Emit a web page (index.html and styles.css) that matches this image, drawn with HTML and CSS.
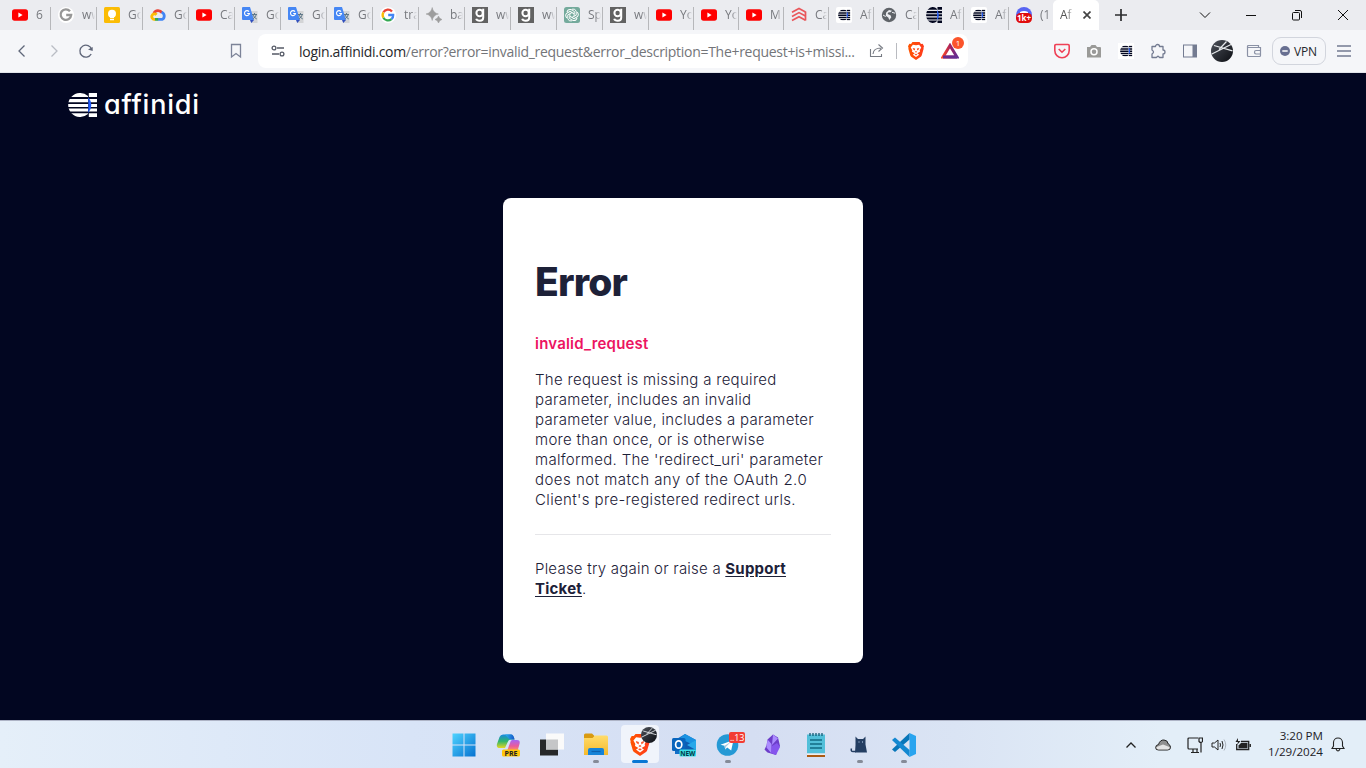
FILE: index.html
```
<!DOCTYPE html>
<html lang="en">
<head>
<meta charset="utf-8">
<title>Affinidi Login</title>
<link rel="stylesheet" href="styles.css">
</head>
<body>
<svg class="defs" width="0" height="0" aria-hidden="true">
  <defs>
    <linearGradient id="g-bat" x1="0" x2="1"><stop offset="0" stop-color="#ff4724"/><stop offset=".55" stop-color="#9e1f63"/><stop offset="1" stop-color="#662d91"/></linearGradient>
    <linearGradient id="g-win" x1="0" y1="0" x2="1" y2="1"><stop offset="0" stop-color="#4fd3ff"/><stop offset="1" stop-color="#0672d0"/></linearGradient>
    <linearGradient id="g-brave" x1="0" x2="1"><stop offset="0" stop-color="#ff5500"/><stop offset="1" stop-color="#ff3a1c"/></linearGradient>
    <linearGradient id="g-fold" x1="0" y1="0" x2="0" y2="1"><stop offset="0" stop-color="#ffdc6b"/><stop offset="1" stop-color="#f5b92c"/></linearGradient>
    <linearGradient id="g-av" x1="0" y1="0" x2="1" y2="1"><stop offset="0" stop-color="#4d525b"/><stop offset="1" stop-color="#0b0d12"/></linearGradient>
    <linearGradient id="g-cop1" x1="0" y1="0" x2="1" y2="0"><stop offset="0" stop-color="#26b7f0"/><stop offset="1" stop-color="#1854c8"/></linearGradient>
    <linearGradient id="g-cop2" x1="0" y1="0" x2="0" y2="1"><stop offset="0" stop-color="#a566f5"/><stop offset=".55" stop-color="#eb5b9b"/><stop offset="1" stop-color="#ff9b55"/></linearGradient>
    <linearGradient id="g-cop3" x1="0" y1="0" x2="0" y2="1"><stop offset="0" stop-color="#1889e0"/><stop offset=".5" stop-color="#2fb56c"/><stop offset="1" stop-color="#e6d722"/></linearGradient>
    <symbol id="yt" viewBox="0 0 16 16"><rect y="2.3" width="16" height="11.4" rx="2.6" fill="#f00"/><path d="M6.4 5.6v4.8L10.6 8z" fill="#fff"/></symbol>
    <symbol id="ggrey" viewBox="0 0 16 16"><circle cx="8" cy="8" r="8" fill="#fff"/><path d="M12 4.2A5.3 5.3 0 1 0 13.2 8H8.2" fill="none" stroke="#979797" stroke-width="2.3"/></symbol>
    <symbol id="gcol" viewBox="0 0 16 16"><circle cx="8" cy="8" r="8" fill="#fff"/><g fill="none" stroke-width="2.3"><path d="M12 4.4A5.3 5.3 0 0 0 3.4 5.3" stroke="#ea4335"/><path d="M3.4 5.3a5.3 5.3 0 0 0 0 5.4" stroke="#fbbc05"/><path d="M3.4 10.7a5.3 5.3 0 0 0 8.1 1.4" stroke="#34a853"/><path d="M11.5 12.1A5 5 0 0 0 13.2 8H8.2" stroke="#4285f4"/></g></symbol>
    <symbol id="keep" viewBox="0 0 16 16"><rect width="16" height="16" rx="1.5" fill="#fbbc04"/><circle cx="8" cy="6.8" r="4" fill="#fff"/><path d="M6 9h4v2.2H6zM6 12h4v1.3H6z" fill="#fff"/></symbol>
    <symbol id="cloud" viewBox="0 0 16 16"><g fill="none" stroke-width="2.8"><path d="M3.9 6.3A4.6 4.6 0 0 1 12 5.8" stroke="#ea4335"/><path d="M11.6 5.2A4 4 0 0 1 12.3 12.4H8" stroke="#4285f4"/><path d="M8.2 12.4H4.6" stroke="#34a853"/><path d="M5 12.4a2.8 2.8 0 1 1 1.6-4.7" stroke="#fbbc05"/></g></symbol>
    <symbol id="trans" viewBox="0 0 16 16"><path d="M6 4h9.5v12H9z" fill="#d3d4d6"/><path d="M1 0h7l4 13H1a1 1 0 0 1-1-1V1a1 1 0 0 1 1-1z" fill="#4687f4"/><path d="M8 13h4l-2.7 3z" fill="#304fbe"/><path d="M7 4.6A2.5 2.5 0 1 0 7.5 6.5H5.2" fill="none" stroke="#fff" stroke-width="1.1"/><path d="M10 7.5h5M12.5 6v1.5M14.4 7.5q-1 3-3.6 4.4M11 8q1.4 3 3.8 4" fill="none" stroke="#60798a"/></symbol>
    <symbol id="spark" viewBox="0 0 16 16"><path d="M6.2.5q1 5.400 6.200 6.500-5.200 1.100-6.200 6.500Q5.200 8.100 0 7 5.200 5.900 6.200.5zM12.500 9q.7 2.900 3.500 3.500-2.800.6-3.500 3.500-.7-2.900-3.500-3.500 2.800-.6 3.500-3.500z" fill="#9d9d9d" stroke="#9d9d9d" stroke-width=".5"/></symbol>
    <symbol id="gsq" viewBox="0 0 16 16"><rect width="16" height="16" fill="#626262"/><circle cx="7.6" cy="6" r="3.2" fill="none" stroke="#fff" stroke-width="2"/><path d="M11.2 1.800v9q0 3-3.400 3-3 0-3.600-2" fill="none" stroke="#fff" stroke-width="2"/></symbol>
    <symbol id="gpt" viewBox="0 0 16 16"><rect width="16" height="16" rx="2.500" fill="#74aa9c"/><g fill="none" stroke="#fff" stroke-width=".95"><path id="pet" d="M8 2.200q3-1 4.200 2v4L8 10.400"/><use href="#pet" transform="rotate(60 8 8)"/><use href="#pet" transform="rotate(120 8 8)"/><use href="#pet" transform="rotate(180 8 8)"/><use href="#pet" transform="rotate(240 8 8)"/><use href="#pet" transform="rotate(300 8 8)"/></g></symbol>
    <symbol id="todo" viewBox="0 0 16 16"><g fill="none" stroke="#e9565b" stroke-width="1.700"><path d="M1 5.200 8 1.500l6.500 3.400M1 9.400l7-3.800 6.500 3.500M1 13.600l7-3.800 6.500 3.500"/><path d="M14.500 4.500v9"/></g></symbol>
    <symbol id="globe" viewBox="0 0 16 16"><circle cx="8" cy="8" r="7.200" fill="#5f6368"/><path d="M5.200 5.500 8 3l3 .8-1.500 1.500H7.500L6.500 7l3 1.300.8 2-2 2.800-1-2.600-2.600-1.800z" fill="#edeef2"/><path d="M2 8l2.700 1.600M11 5.300l3 .9" stroke="#edeef2"/></symbol>
    <symbol id="aff" viewBox="0 0 29 24" preserveAspectRatio="none"><clipPath id="cc"><path d="M20 2.900A12 12 0 1 0 20 21.100zM20.800 0H29v24H20.800z"/></clipPath><g clip-path="url(#cc)" fill="currentColor"><path d="M0 0h29v4H0zM0 6h29v3.200H0zM0 11h29v3H0zM0 15.600h29v3H0zM0 20.200h29V24H0z"/></g><path d="M20.300 4v16q6-8 0-16z" fill="#1d58fc"/></symbol>
    <symbol id="affbox" viewBox="0 0 16 16"><rect width="16" height="16" rx="2" fill="#fff"/><use href="#aff" x="2" y="2.500" width="12.500" height="11"/></symbol>
    <symbol id="disc" viewBox="0 0 16 16"><circle cx="8" cy="8" r="8" fill="#5865f2"/><path d="M4 5q4-2 8 0v4H4z" fill="#fff"/><rect y="6" width="16" height="10" rx="4.500" fill="#e00c0c"/></symbol>
    <symbol id="brave" viewBox="0 0 18 20"><path d="M5 0h8l1.600 2 1.900-.2L18 4.600l-.6 2 .2 1-2.100 7.200q-.3 1-1.100 1.600L9 20l-5.400-3.600q-.8-.6-1.100-1.600L.4 7.600l.2-1-.6-2 1.500-2.800 1.900.2z" fill="url(#g-brave)"/><path d="M9 3.400l3.500-.4 2.400 3-1.700 3.200.3 1.600-3.100 1.800 2.200 1.500L9 16.800l-3.600-2.700 2.200-1.500-3.100-1.800.3-1.600L3.100 6l2.400-3z" fill="#fff"/><path d="M5.300 6.500l2.700.7-.2 2.300-2-1.300zM12.700 6.500l-2.700.7.2 2.300 2-1.300zM7.700 11.100L9 11.800l1.300-.7-.5-.8H8.200zM7.300 14L9 13l1.700 1L9 15z" fill="#fb542b"/></symbol>
    <symbol id="avatar" viewBox="0 0 22 22"><circle cx="11" cy="11" r="11" fill="url(#g-av)"/><path d="M.8 14 20 4.500M3 5.500l18.500 5.300M15.500 1.500 8 9.500" stroke="#e6e9ec" stroke-width="1.200"/></symbol>
  </defs>
</svg>

<div class="screen">
  <header class="browser">
    <div class="tabs">
      <div class="tab"><svg><use href="#yt"/></svg><span>6</span></div>
      <div class="tab"><svg><use href="#ggrey"/></svg><span>ww</span></div>
      <div class="tab"><svg><use href="#keep"/></svg><span>Go</span></div>
      <div class="tab"><svg><use href="#cloud"/></svg><span>Go</span></div>
      <div class="tab"><svg><use href="#yt"/></svg><span>Ca</span></div>
      <div class="tab"><svg><use href="#trans"/></svg><span>Go</span></div>
      <div class="tab"><svg><use href="#trans"/></svg><span>Go</span></div>
      <div class="tab"><svg><use href="#trans"/></svg><span>Go</span></div>
      <div class="tab"><svg><use href="#gcol"/></svg><span>tra</span></div>
      <div class="tab"><svg><use href="#spark"/></svg><span>ba</span></div>
      <div class="tab"><svg><use href="#gsq"/></svg><span>ww</span></div>
      <div class="tab"><svg><use href="#gsq"/></svg><span>ww</span></div>
      <div class="tab"><svg><use href="#gpt"/></svg><span>Sp</span></div>
      <div class="tab"><svg><use href="#gsq"/></svg><span>ww</span></div>
      <div class="tab slim"><svg><use href="#yt"/></svg><span>Yo</span></div>
      <div class="tab slim"><svg><use href="#yt"/></svg><span>Yo</span></div>
      <div class="tab slim"><svg><use href="#yt"/></svg><span>M</span></div>
      <div class="tab slim"><svg><use href="#todo"/></svg><span>Ca</span></div>
      <div class="tab slim"><svg><use href="#affbox"/></svg><span>Af</span></div>
      <div class="tab slim"><svg><use href="#globe"/></svg><span>Ca</span></div>
      <div class="tab slim"><svg><use href="#aff"/></svg><span>Af</span></div>
      <div class="tab slim"><svg><use href="#affbox"/></svg><span>Af</span></div>
      <div class="tab slim last"><svg viewBox="0 0 16 16"><use href="#disc"/><text x="8" y="13.800" class="count">1k+</text></svg><span>(1</span></div>
      <div class="tab active"><span>Af</span><svg class="x" viewBox="0 0 8 8"><path d="M.5.5l7 7m0-7l-7 7" stroke="#444" stroke-width="1.700"/></svg></div>
      <svg class="plus" viewBox="0 0 12 12"><path d="M6 0v12M0 6h12" stroke="#2c2c2e" stroke-width="1.700"/></svg>
      <div class="winctl">
        <svg viewBox="0 0 12 12"><path d="M1 3.500l5 5 5-5"/></svg>
        <svg viewBox="0 0 12 12"><path d="M1 6.500h10"/></svg>
        <svg viewBox="0 0 12 12"><rect x="1.500" y="3.500" width="7" height="7.500" rx="1"/><path d="M4 1.500h5q1.500 0 1.500 1.500v6"/></svg>
        <svg viewBox="0 0 12 12"><path d="M1 1l10 10M11 1L1 11"/></svg>
      </div>
    </div>
    <div class="toolbar">
      <div class="nav">
        <svg viewBox="0 0 16 16"><path d="M10.500 2.500 5 8l5.500 5.500" stroke="#5f6679" stroke-width="1.300"/></svg>
        <svg viewBox="0 0 16 16"><path d="M5.500 2.500 11 8l-5.500 5.500" stroke="#b9bcc4" stroke-width="1.300"/></svg>
        <svg viewBox="0 0 16 16"><path d="M13.700 6.500A6 6 0 1 0 13.200 11" stroke="#5f6679" stroke-width="1.300"/><path d="M10 6.500l4.700 1.500V4z" fill="#5f6679"/></svg>
      </div>
      <svg class="bookmark" viewBox="0 0 16 16"><path d="M3.500 1.500h9V14L8 10.500 3.500 14z" stroke="#7c8398" stroke-width="1.300"/></svg>
      <div class="address">
        <svg class="tune" viewBox="0 0 14 12"><g stroke="#555a66" stroke-width="1.300"><circle cx="3" cy="3" r="1.900"/><path d="M6 3h7M1 9h7"/><circle cx="11" cy="9" r="1.900"/></g></svg>
        <div class="url"><b>login.affinidi.com</b>/error?error=invalid_request&amp;error_description=The+request+is+missi...</div>
        <svg class="share" viewBox="0 0 16 16"><path d="M1.500 6v7.500h11V11M4 11q.5-6 8-6M9.500 1.500 13.500 5l-4 3.500" stroke="#777b83" stroke-width="1.100"/></svg>
        <i class="sep"></i>
        <svg class="brave"><use href="#brave"/></svg>
        <div class="rewards"><svg viewBox="0 0 18 16"><path d="M9 2.500 16 14H2z" stroke="url(#g-bat)" stroke-width="3"/><path d="M2 14h14" stroke="#662d91" stroke-width="3"/></svg><em>1</em></div>
      </div>
      <div class="ext">
        <svg viewBox="0 0 16 16"><path d="M2 1.500h12q1.200 0 1.200 1.200V7.500a7.200 7.200 0 0 1-14.400 0V2.700Q.8 1.500 2 1.500zM4.700 6 8 9.200 11.300 6" stroke="#ef4056" stroke-width="1.600"/></svg>
        <svg viewBox="0 0 16 16"><path d="M1 4h3l1.500-2h4L11 4h3q1 0 1 1v9.500H1z" fill="#9a9a98"/><circle cx="8" cy="8.800" r="3" fill="#999" stroke="#fff" stroke-width="1.500"/></svg>
        <svg viewBox="0 0 16 16"><rect width="16" height="16" fill="#fff"/><use href="#aff" x="2" y="2.500" width="12.500" height="11"/></svg>
        <svg viewBox="0 0 16 16"><path d="M2 3.500h3.500a2 2 0 0 1 4 0H13V7a2 2 0 0 1 0 4v3.500H9.500q-1.500-2.500-3 0H2V11q3-2 0-4z" stroke="#737b91" stroke-width="1.300" stroke-linejoin="round"/></svg>
        <svg viewBox="0 0 16 16"><rect x="1.500" y="2" width="13" height="12" stroke="#737b91"/><path d="M10.500 2H15v12h-4.500z" fill="#737b91"/></svg>
        <svg class="big"><use href="#avatar"/></svg>
        <svg viewBox="0 0 16 16"><path d="M12.500 4.500v-2h-10q-1 0-1 1v9q0 1 1 1h11q1 0 1-1v-8h-13M14.500 7.500H10q-1.500 0-1.500 1.700T10 11h4.500" stroke="#8a91a5" stroke-width="1.200"/></svg>
      </div>
      <div class="vpn"><svg viewBox="0 0 10 10"><circle cx="5" cy="5" r="5" fill="#686f91"/><path d="M2.300 5h5.400" stroke="#fff" stroke-width="1.500"/></svg>VPN</div>
      <svg class="menu" viewBox="0 0 14 12"><path d="M0 1h14M0 6h14M0 11h14" stroke="#737b91" stroke-width="1.300"/></svg>
    </div>
  </header>

  <main class="page">
    <div class="brand"><svg><use href="#aff"/></svg><span>affinidi</span></div>
    <section class="card">
      <h1>Error</h1>
      <p class="code">invalid_request</p>
      <p class="text">The request is missing a required<br>parameter, includes an invalid<br>parameter value, includes a parameter<br>more than once, or is otherwise<br>malformed. The 'redirect_uri' parameter<br><span class="wide">does not match any of the OAuth 2.0</span><br><span class="mid">Client's pre-registered redirect urls.</span></p>
      <hr>
      <p class="text help">Please try again or raise a <a>Support<br>Ticket</a>.</p>
    </section>
  </main>

  <footer class="taskbar">
    <div class="apps">
      <div class="app"><svg viewBox="0 0 24 24"><path d="M.5.500h11v11H.5zM12.500.500h11v11h-11zM.5 12.500h11v11H.5zM12.500 12.500h11v11h-11z" fill="url(#g-win)"/></svg></div>
      <div class="app"><svg viewBox="0 0 24 24"><path d="M7 1.500h8q2.500 0 3.500 5h-4q-2 0-3 3L9 15H4q-4 0-3-4l2.500-7Q4.500 1.500 7 1.500z" fill="url(#g-cop3)"/><path d="M9 1.500h6q2.500 0 3.500 5h-5z" fill="url(#g-cop1)"/><path d="M16 7h5q3.500 0 2.500 4l-2 7H11l3-8q.7-3 2-3z" fill="url(#g-cop2)"/><rect x="6" y="16.500" width="18" height="7" rx="1.500" fill="#ffc60a"/><text x="15" y="22.600" class="pre">PRE</text></svg></div>
      <div class="app"><svg viewBox="0 0 24 24"><rect y="6.500" width="18" height="16" fill="#272829"/><path d="M6 .500h18v16H6z" fill="#fafafa"/><path d="M6 6.500h12v10H6z" fill="#c5c6c8"/></svg></div>
      <div class="app open"><svg viewBox="0 0 24 24"><path d="M0 2q0-1.500 1.500-1.500h6.500L10.500 3v4H0z" fill="#d99a11"/><path d="M0 5h8.500L11 2.500h11.500Q24 2.500 24 4v18H0z" fill="url(#g-fold)"/><path d="M4 22v-5q0-2 2-2h12q2 0 2 2v5z" fill="#1583d8"/><path d="M7.500 18.500h9" stroke="#0c60ae" stroke-width="1.200"/></svg></div>
      <div class="app current"><svg class="lion"><use href="#brave"/></svg><svg class="pin"><use href="#avatar"/></svg></div>
      <div class="app"><svg viewBox="0 0 24 24"><path d="M3 7 13 1l11 6v14H3z" fill="#1270c8"/><path d="M13 1l11 6-8 5-8-7z" fill="#1b93e2"/><path d="M13 8l11 5v8H10z" fill="#0f5cb0"/><path d="M24 7v10l-9-5z" fill="#28a8ea"/><rect y="5" width="13.500" height="13" rx="1.500" fill="#0965bd"/><ellipse cx="6.700" cy="11.500" rx="3.100" ry="3.700" stroke="#fff" stroke-width="1.700"/><rect x="7.500" y="16.500" width="16.500" height="7" rx="1" fill="#3ce0e7"/><text x="15.800" y="22.500" class="new">NEW</text></svg></div>
      <div class="app open"><svg viewBox="0 0 24 24"><circle cx="11.500" cy="12" r="10.800" fill="#2599d5"/><path d="M4.500 11.700 17.500 7l-2.300 10.500-4-3-2 2-.7-3.700z" fill="#fff"/><path d="M8.500 12.800 15 8.800l-5 5-.8 2.700z" fill="#a8cae1"/></svg><em class="notice">..13</em></div>
      <div class="app"><svg viewBox="0 0 24 24"><path d="M13 1.500 7.500 6.500l-1 6-2 4 3 3 8.500 2.500 1-4 3-5-2-8.500z" fill="#6c3dc9"/><path d="M13 1.500l-1 10.500 6-6.500zM7.500 6.500l-1 8 5 6V11z" fill="#ab8cff"/><path d="m12 13 5-3 3 4-4 8-5-2z" fill="#8555ed"/></svg></div>
      <div class="app"><svg viewBox="0 0 24 24"><path d="M3 1.500h18v19H3z" fill="#52bfd9"/><path d="M3 20.500h18v1.700H3z" fill="#eee"/><path d="M3 22h18v2H3z" fill="#ac5a12"/><path d="M6 0v3M9 0v3M12 0v3M15 0v3M18 0v3" stroke="#125b75" stroke-width="1.300"/><path d="M6 7h12M6 11h12M6 15h12" stroke="#126b84" stroke-width="1.500"/></svg></div>
      <div class="app open"><svg viewBox="0 0 24 24"><path d="M7.500 3.500 10 6h5l2.500-2.500v8L19 19.500H7L7.500 12z" fill="#243e62"/><path d="M8 18.500H5q-2.500 0-1.500-3" stroke="#243e62" stroke-width="1.500"/><path d="M10.500 9h1M14 9h1" stroke="#c4dcf5"/></svg></div>
      <div class="app open"><svg viewBox="0 0 24 24"><path d="M17.500 0 24 3v18l-6.500 3z" fill="#29a4ef"/><path d="M17.500 0v6.500L3 19l-3-2.500z" fill="#0876b9"/><path d="M0 7l3-2.500L17.500 17v7z" fill="#1388d1"/></svg></div>
    </div>
    <div class="tray">
      <svg class="up" viewBox="0 0 10 6"><path d="M.5 5.500 5 1l4.500 4.500" stroke="#222" stroke-width="1.300"/></svg>
      <svg class="weather" viewBox="0 0 16 12"><path d="M3.500 11Q.5 11 .7 8.500.7 6 3.500 5.500 5 .700 9 1q3.500 0 4.300 4 2.200 1 2.200 3.300 0 2.700-3 2.700z" fill="#8f8f8f" stroke="#222"/><path d="M3.500 10.500Q1 10 1.500 8L8 5.500l6.500 2.500q.5 2.500-2 2.500z" fill="#e4e4e4"/></svg>
      <svg class="net" viewBox="0 0 16 16"><path d="M11 1H2q-1 0-1 1v9q0 1 1 1h9M4 15.500h8M6 12v3M10 12v3M14 6v9.500M12 1h3.500v3.500q-1.500 2-3.500 0z" stroke="#222" stroke-width="1.200"/></svg>
      <svg class="sound" viewBox="0 0 16 14"><path d="M1 5h2.500L7 2v10L3.500 9H1z" stroke="#222"/><path d="M9 5q1 2 0 4M11 3q2 4 0 8" stroke="#222"/><path d="M13 1.500q3.500 5.500 0 11" stroke="#adb4bd"/></svg>
      <svg class="battery" viewBox="0 0 16 13"><path d="M1.700 6v5.500h12V3.500H6M15.300 6v3" stroke="#222" stroke-width="1.300"/><path d="M3.500 7.500 6 5h6.500v5.200h-9z" fill="#222"/><path d="M3 0 .5 4H3L2 7l3.500-4H3z" fill="#222"/></svg>
      <div class="clock">3:20 PM<br>1/29/2024</div>
      <svg class="bell" viewBox="0 0 14 15"><path d="M1 11.500 2.500 9V5.500a4.500 4.500 0 0 1 9 0V9l1.500 2.500zM5 12q2 4 4 0" stroke="#222" stroke-width="1.100"/></svg>
    </div>
  </footer>
</div>
</body>
</html>
```
FILE: styles.css
```
* { box-sizing: border-box; }
body { margin: 0; overflow: hidden; }
.defs { position: absolute; }
svg { display: block; flex: none; fill: none; }
.screen { width: 1366px; height: 768px; display: flex; flex-direction: column; font-family: "Open Sans", "Noto Sans", sans-serif; }

.browser { height: 73px; background: #f5f6f9; border-bottom: 1px solid #e1e4e9; }
.tabs { height: 30px; display: flex; align-items: center; background: #ebecf0; padding-left: 5px; }
.tab { width: 46px; height: 30px; padding-left: 7px; display: flex; align-items: center; gap: 8px; background: linear-gradient(#b6b7ba, #b6b7ba) right bottom / 1px 23px no-repeat; color: #77797e; }
.tab svg { width: 16px; height: 16px; color: #02061f; }
.tab span { width: 13px; overflow: hidden; white-space: nowrap; font-size: 12px; line-height: 18px; -webkit-mask-image: linear-gradient(90deg, #000 55%, transparent); mask-image: linear-gradient(90deg, #000 55%, transparent); }
.slim { width: 45px; }
.slim span { width: 12px; }
.tab.last { width: 44px; background: none; }
.tab.active { width: 46px; background: #fff; border-radius: 5px 5px 0 0; color: #555; gap: 10px; }
.tab .x { width: 8px; height: 8px; }
.count { font: bold 8px "Open Sans", sans-serif; fill: #fff; text-anchor: middle; }
.plus { width: 12px; height: 12px; margin-left: 16px; }
.winctl { display: flex; gap: 34px; margin-left: 72px; }
.winctl svg { width: 12px; height: 12px; stroke: #111; stroke-width: 1; }

.toolbar { height: 42px; display: flex; align-items: center; }
.nav { display: flex; gap: 16px; padding-left: 14px; width: 228px; }
.nav svg, .bookmark { width: 16px; height: 16px; }
.address { margin-left: 14px; width: 710px; height: 34px; border-radius: 8px; background: #fff; display: flex; align-items: center; }
.tune { width: 14px; height: 12px; margin-left: 13px; }
.url { margin-left: 14px; width: 570px; white-space: nowrap; font-size: 14px; letter-spacing: -0.29px; color: #737579; }
.url b { font-weight: 400; color: #26282b; }
.share { width: 16px; height: 16px; }
.sep { width: 1px; height: 16px; background: #b9bbc0; margin: 0 11px; }
.brave { width: 16px; height: 18px; }
.rewards { position: relative; margin-left: 17px; }
.rewards svg { width: 18px; height: 16px; }
.rewards em { position: absolute; left: 11px; top: -6px; width: 12px; height: 12px; border-radius: 50%; background: #fb542b; color: #fff; font: 8px/12px "Open Sans", sans-serif; text-align: center; }
.ext { display: flex; align-items: center; margin-left: 78px; width: 226px; }
.ext svg { width: 16px; height: 16px; margin: 0 8px; color: #02061f; }
.ext svg.big { width: 22px; height: 22px; margin: 0 5px; }
.vpn { width: 54px; height: 28px; border: 1px solid #d2d5dd; border-radius: 9px; display: flex; align-items: center; gap: 4px; padding-left: 7px; font-size: 12px; letter-spacing: -0.2px; color: #25272d; }
.vpn svg { width: 10px; height: 10px; }
.menu { width: 14px; height: 12px; margin-left: 11px; }

.page { height: 647px; background: #020621; display: flex; flex-direction: column; align-items: center; font-family: Inter, sans-serif; }
.brand { align-self: flex-start; display: flex; align-items: center; gap: 7px; height: 24px; margin: 20px 0 0 68px; color: #fff; }
.brand svg { width: 29px; height: 24px; }
.brand span { font-size: 27px; line-height: 24px; font-weight: 500; letter-spacing: 0.8px; font-feature-settings: "cv11", "ss03"; }
.card { width: 360px; height: 465px; margin-top: 81px; padding: 56px 32px; border-radius: 8px; background: #fff; color: #1d2138; }
.card p, .card h1 { margin: 0; white-space: nowrap; }
.card h1 { font-size: 39px; line-height: 56px; font-weight: 800; letter-spacing: -0.8px; }
.card .code { margin-top: 24px; font-size: 15px; line-height: 20px; font-weight: 600; letter-spacing: 0.2px; color: #ec1461; }
.card .text { margin-top: 16px; font-size: 15px; line-height: 20px; font-weight: 300; letter-spacing: 0.3px; }
.wide { letter-spacing: 0.47px; }
.mid { letter-spacing: 0.36px; }
.card hr { margin: 24px 0; border: 0; height: 1px; background: #e6e6e9; }
.card .help { margin-top: 0; letter-spacing: 0.22px; }
.card a { font-weight: 700; text-decoration: underline; text-underline-offset: 2px; }

.taskbar { height: 48px; border-top: 1px solid #aeb4c6; background: linear-gradient(90deg, #e5eff9 0, #d8e4f7 30%, #d5def2 55%, #dae4f4 70%, #e3eef8 85%); display: flex; }
.apps { display: flex; margin-left: 442px; width: 673px; }
.app { position: relative; width: 44px; height: 47px; display: flex; align-items: center; justify-content: center; }
.app svg { width: 24px; height: 24px; }
.open::after { content: ""; position: absolute; bottom: 5px; width: 6px; height: 3px; border-radius: 2px; background: #858b98; }
.current::before { content: ""; position: absolute; inset: 4px 3px 5px; background: #f0f4fb; border-radius: 4px; }
.current::after { content: ""; position: absolute; bottom: 5px; width: 16px; height: 3px; border-radius: 2px; background: #0877d4; }
.current svg { position: relative; }
.app .lion { width: 20px; height: 24px; }
.app .pin { position: absolute; width: 16px; height: 16px; left: 23px; top: 6px; }
.pre { font: bold 7px "Open Sans", sans-serif; fill: #222; text-anchor: middle; }
.new { font: bold 6.500px "Open Sans", sans-serif; fill: #063b48; text-anchor: middle; }
.notice { position: absolute; left: 23px; top: 11px; width: 16px; height: 11px; border-radius: 2px; background: #f23c34; color: #fff; font: 9px/11px "Open Sans", sans-serif; letter-spacing: -0.2px; text-align: center; }
.tray { display: flex; align-items: center; flex: 1; }
.up { width: 10px; height: 6px; margin-left: 11px; }
.weather { width: 16px; height: 12px; margin-left: 19px; }
.net { width: 16px; height: 16px; margin-left: 16px; }
.sound { width: 16px; height: 14px; margin-left: 8px; }
.battery { width: 16px; height: 13px; margin-left: 8px; }
.clock { width: 72px; padding-bottom: 2px; text-align: right; font-size: 11.600px; line-height: 16px; color: #1d2127; }
.bell { width: 14px; height: 15px; margin-left: 8px; }
```
